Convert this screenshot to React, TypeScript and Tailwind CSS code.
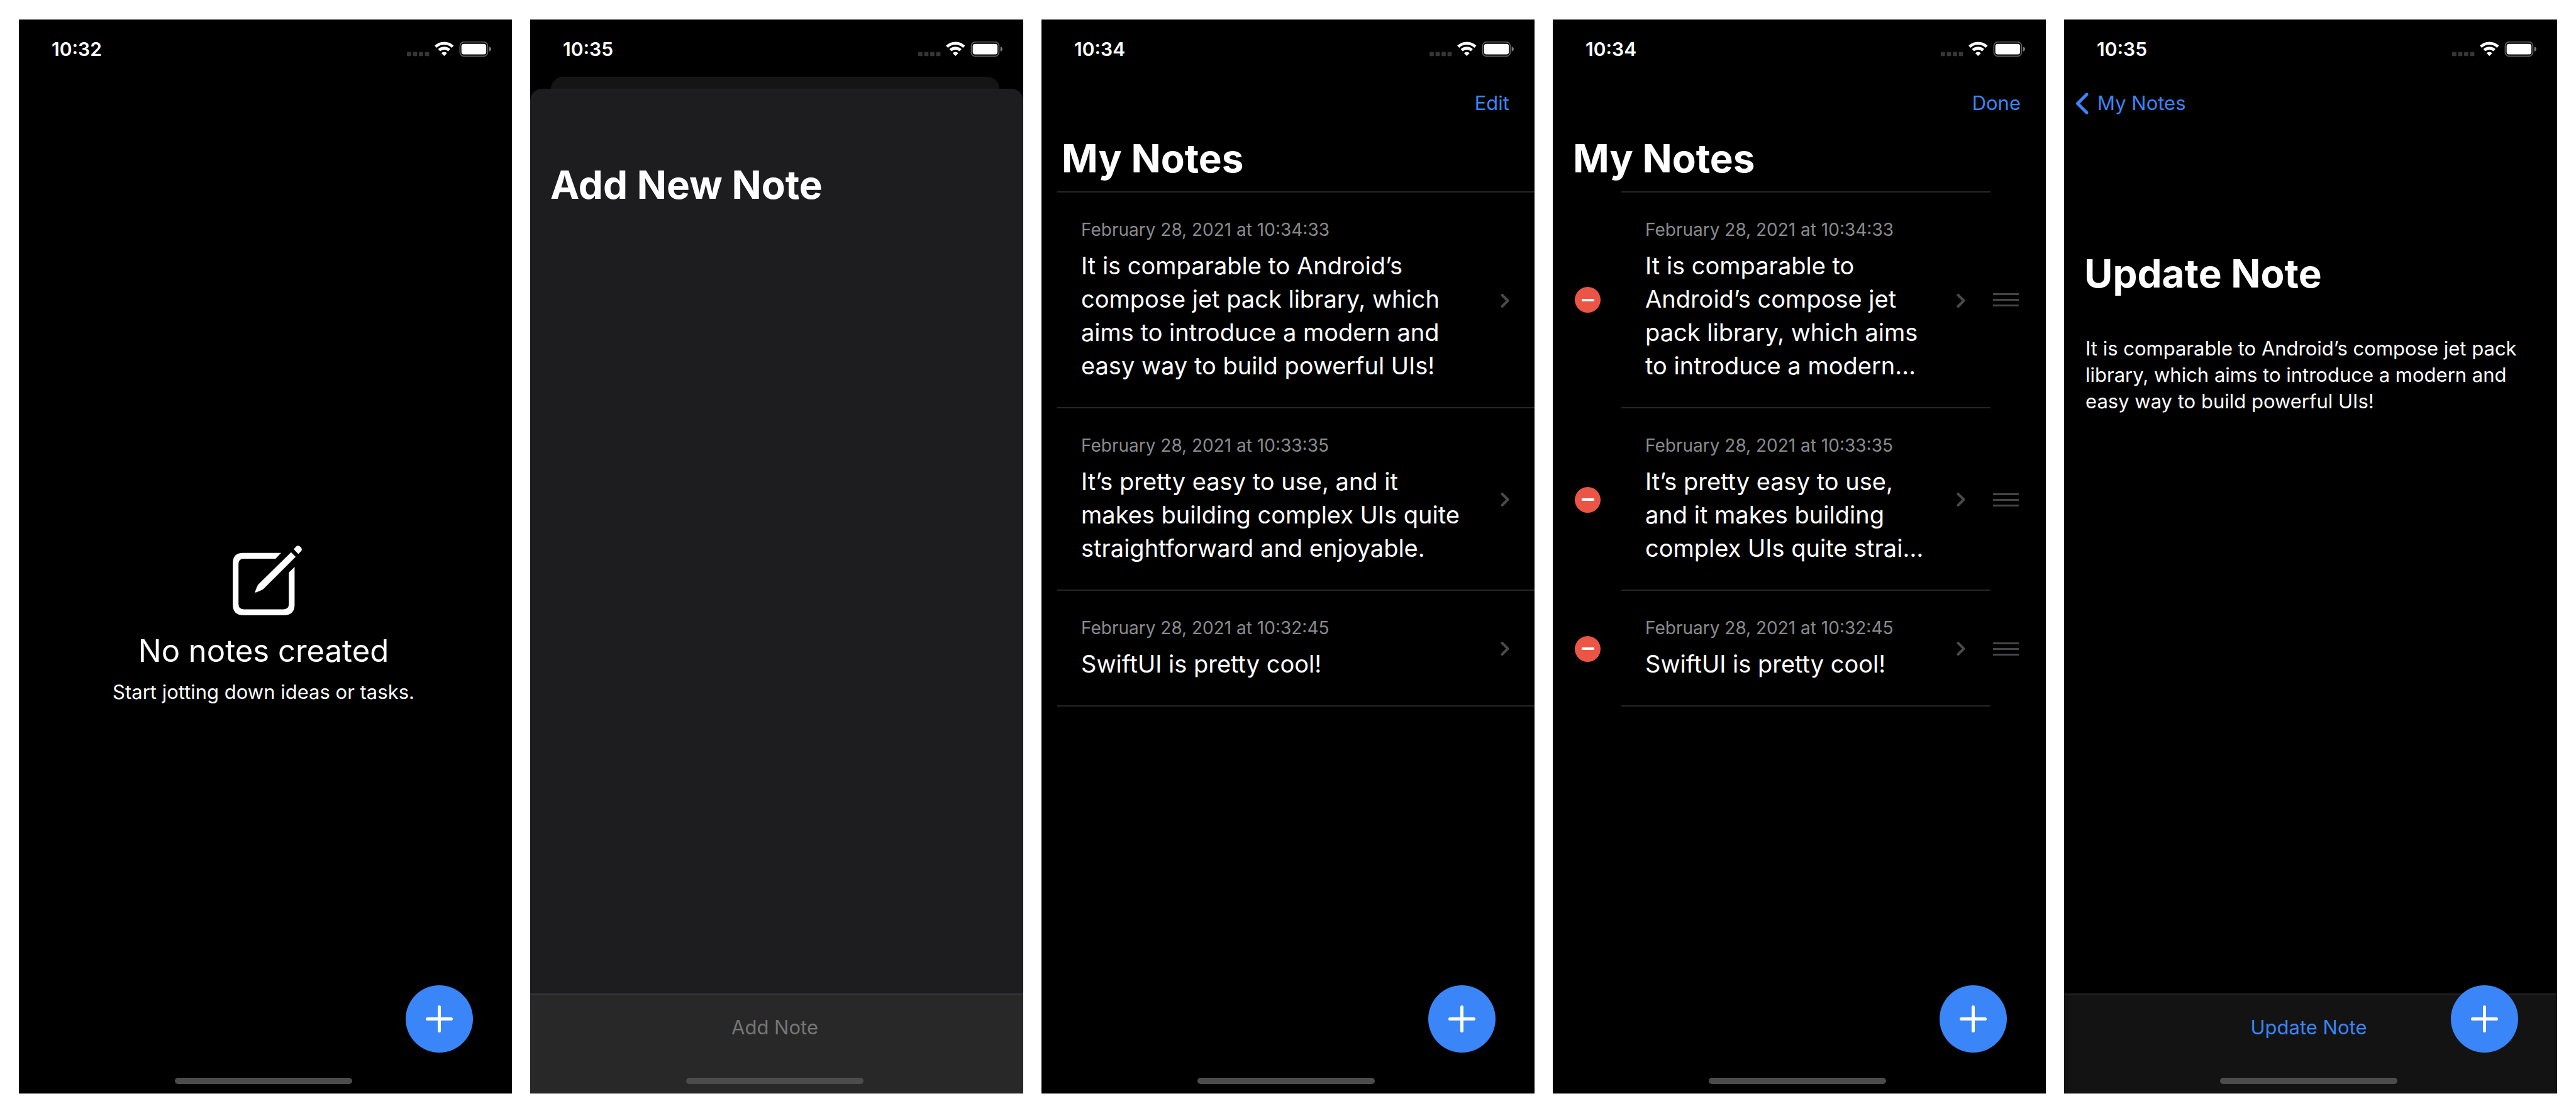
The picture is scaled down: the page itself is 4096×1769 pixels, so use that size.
import type { ReactNode } from 'react';

const notes = [
  {
    date: 'February 28, 2021 at 10:34:33',
    text: 'It is comparable to Android’s compose jet pack library, which aims to introduce a modern and easy way to build powerful UIs!',
    preview: 'It is comparable to Android’s compose jet pack library, which aims to introduce a modern…',
  },
  {
    date: 'February 28, 2021 at 10:33:35',
    text: 'It’s pretty easy to use, and it makes building complex UIs quite straightforward and enjoyable.',
    preview: 'It’s pretty easy to use, and it makes building complex UIs quite strai…',
  },
  {
    date: 'February 28, 2021 at 10:32:45',
    text: 'SwiftUI is pretty cool!',
    preview: 'SwiftUI is pretty cool!',
  },
];

function StatusIcons() {
  return (
    <svg viewBox="45 79 408 73" className="h-6 w-[134px]" aria-hidden="true">
      <g fill="#363636">
        <rect x="45" y="129" width="21" height="21" rx="5" />
        <rect x="74" y="129" width="21" height="21" rx="5" />
        <rect x="103" y="129" width="21" height="21" rx="5" />
        <rect x="132" y="129" width="21" height="21" rx="5" />
      </g>
      <g fill="none" stroke="#fff" strokeWidth="14">
        <path d="M184 104 A60 60 0 0 1 267 104" />
        <path d="M201 121 A36 36 0 0 1 250 121" />
      </g>
      <path d="M212 135 A19 19 0 0 1 239 135 L225.500 149 Z" fill="#fff" />
      <rect x="302" y="81" width="134" height="69" rx="19" fill="none" stroke="#636363" strokeWidth="5" />
      <rect x="309" y="90" width="120" height="51" rx="11" fill="#fff" />
      <path d="M443 104 C450 106 453 110 453 115.500 C453 121 450 125 443 127 Z" fill="#7a7a7a" />
    </svg>
  );
}

function StatusBar({ time }: { time: string }) {
  return (
    <div className="flex h-[93px] shrink-0 items-center justify-between pr-[33px] pl-[52px]">
      <time className="text-[30px] leading-9 font-semibold">{time}</time>
      <StatusIcons />
    </div>
  );
}

function Phone({ label, children }: { label: string; children: ReactNode }) {
  return (
    <section aria-label={label} className="relative flex min-w-0 flex-col overflow-hidden bg-black text-white">
      {children}
    </section>
  );
}

function HomeIndicator() {
  return (
    <div className="mt-auto flex shrink-0 justify-center pr-[6px] pb-[15px]">
      <div className="h-[10px] w-[282px] rounded-full bg-[#4c4c4c]" />
    </div>
  );
}

function Fab() {
  return (
    <button
      type="button"
      aria-label="New note"
      className="absolute right-[62px] bottom-[65px] flex size-[107px] items-center justify-center rounded-full bg-[#3a85f7]"
    >
      <svg viewBox="0 0 43 43" className="size-[43px]" fill="none" stroke="#fff" strokeWidth="5" strokeLinecap="round" aria-hidden="true">
        <path d="M21.500 2.500 V40.500 M2.500 21.500 H40.500" />
      </svg>
    </button>
  );
}

function Chevron() {
  return (
    <svg viewBox="0 0 14 22" className="h-[22px] w-[14px] shrink-0" fill="none" stroke="#4a4a4c" strokeWidth="4" strokeLinecap="round" strokeLinejoin="round" aria-hidden="true">
      <path d="M2.500 2 L11.500 11 L2.500 20" />
    </svg>
  );
}

function NoteBody({ date, text }: { date: string; text: string }) {
  return (
    <div className="min-w-0 flex-1">
      <p className="text-[28px] leading-9 text-[#8a8a8e]">{date}</p>
      <p className="mt-[13px] text-[38px] leading-[53px]">{text}</p>
    </div>
  );
}

function ListHeader({ action }: { action: string }) {
  return (
    <>
      <div className="flex h-[80px] shrink-0 items-center justify-end pr-10">
        <button type="button" className="text-[31px] leading-10 text-[#3a85f7]">
          {action}
        </button>
      </div>
      <h1 className="h-[100px] shrink-0 pt-2 pl-8 text-[62px] leading-[80px] font-bold">My Notes</h1>
    </>
  );
}

function EmptyScreen() {
  return (
    <Phone label="Empty list">
      <StatusBar time="10:32" />
      <div className="flex flex-col items-center pt-[743px] pr-[6px]">
        <svg viewBox="-12 0 125 113" className="h-[111px] w-[123px]" aria-hidden="true">
          <path
            fill="#fff"
            d="M78.500 12 H17 Q0.300 12 0.300 28.700 V96 Q0.300 112.700 17 112.700 H83.600 Q100.300 112.700 100.300 96 V34.700 L91 43.800 V94.500 Q91 103.300 82.500 103.300 H18 Q9.500 103.300 9.500 94.500 V30 Q9.500 21.300 18 21.300 H69.500 Z"
          />
          <path fill="#fff" d="M94.600 11 L102 18.300 L50 70.300 Q47 72.500 37.600 76 Q36 76.300 36.400 74.500 Q39.500 65.500 42 62.500 Z" />
          <path fill="#fff" d="M98.900 6 L102 2.500 Q105.600 -1.500 109.500 2 Q114 6 110.500 9.700 L106.400 13.700 Z" />
        </svg>
        <h1 className="mt-[22px] text-[49px] leading-[70px]">No notes created</h1>
        <p className="mt-[10px] text-[31px] leading-10">Start jotting down ideas or tasks.</p>
      </div>
      <HomeIndicator />
      <Fab />
    </Phone>
  );
}

function AddScreen() {
  return (
    <Phone label="Add note">
      <StatusBar time="10:35" />
      <div className="-mt-[2px] mr-[38px] ml-[33px] h-[19px] shrink-0 rounded-t-[19px] bg-[#151515]" />
      <div className="flex flex-1 flex-col overflow-hidden rounded-t-[19px] bg-[#1d1d1f]">
        <h1 className="pt-[113px] pl-8 text-[62px] leading-[80px] font-bold">Add New Note</h1>
        <div className="mt-auto flex h-[159px] flex-col border-t-2 border-[#363638] bg-[#282828]">
          <button type="button" disabled className="mt-8 pr-[6px] text-[31px] leading-10 text-[#767676]">
            Add Note
          </button>
          <HomeIndicator />
        </div>
      </div>
    </Phone>
  );
}

function ListScreen() {
  return (
    <Phone label="Notes list">
      <StatusBar time="10:34" />
      <ListHeader action="Edit" />
      <ul className="ml-[25px] border-t-2 border-[#262626]">
        {notes.map((note) => (
          <li key={note.date} className="border-b-2 border-[#262626]">
            <a href="#note" className="flex items-center pt-[41px] pr-10 pb-[39px] pl-[38px]">
              <NoteBody date={note.date} text={note.text} />
              <div className="pl-[45px]">
                <Chevron />
              </div>
            </a>
          </li>
        ))}
      </ul>
      <HomeIndicator />
      <Fab />
    </Phone>
  );
}

function EditScreen() {
  return (
    <Phone label="Edit notes list">
      <StatusBar time="10:34" />
      <ListHeader action="Done" />
      <ul>
        {notes.map((note, index) => (
          <li key={note.date} className="flex">
            <div className="flex w-[109px] shrink-0 items-center pl-[35px]">
              <button type="button" aria-label="Delete note" className="flex size-[41px] items-center justify-center rounded-full bg-[#eb5545]">
                <span className="h-1 w-5 bg-white" />
              </button>
            </div>
            <div className={index === 0 ? 'min-w-0 flex-1 border-y-2 border-[#262626]' : 'min-w-0 flex-1 border-b-2 border-[#262626]'}>
              <a href="#note" className="flex items-center pt-[41px] pr-10 pb-[39px] pl-[38px]">
                <NoteBody date={note.date} text={note.preview} />
                <div className="pl-[45px]">
                  <Chevron />
                </div>
              </a>
            </div>
            <div className="flex w-[88px] shrink-0 items-center pl-1">
              <button type="button" aria-label="Reorder note" className="flex w-[41px] flex-col gap-[6px]">
                <span className="h-[3px] bg-[#454547]" />
                <span className="h-[3px] bg-[#454547]" />
                <span className="h-[3px] bg-[#454547]" />
              </button>
            </div>
          </li>
        ))}
      </ul>
      <HomeIndicator />
      <Fab />
    </Phone>
  );
}

function UpdateScreen() {
  return (
    <Phone label="Update note">
      <StatusBar time="10:35" />
      <div className="flex h-[80px] shrink-0 items-center pl-[18px]">
        <a href="#notes" className="flex items-center gap-[14px] text-[31px] leading-10 text-[#3a85f7]">
          <svg viewBox="0 0 21 35" className="h-[35px] w-[21px]" fill="none" stroke="currentColor" strokeWidth="5" strokeLinecap="round" strokeLinejoin="round" aria-hidden="true">
            <path d="M18 3 L3.500 17.500 L18 32" />
          </svg>
          My Notes
        </a>
      </div>
      <h1 className="pt-[191px] pl-8 text-[62px] leading-[80px] font-bold">Update Note</h1>
      <textarea
        aria-label="Note text"
        rows={3}
        className="mt-[58px] resize-none overflow-hidden bg-transparent pr-10 pl-[34px] text-[31px] leading-[42px] outline-none"
        defaultValue="It is comparable to Android’s compose jet pack library, which aims to introduce a modern and easy way to build powerful UIs!"
      />
      <div className="mt-auto flex h-[159px] flex-col border-t-2 border-[#232323] bg-[#131313]">
        <button type="button" className="mt-8 pr-[6px] text-[31px] leading-10 text-[#3a85f7]">
          Update Note
        </button>
        <HomeIndicator />
      </div>
      <Fab />
    </Phone>
  );
}

export default function App() {
  return (
    <main className="grid min-h-screen grid-cols-5 gap-[29px] bg-white px-[30px] py-[31px] font-['Inter',sans-serif]">
      <EmptyScreen />
      <AddScreen />
      <ListScreen />
      <EditScreen />
      <UpdateScreen />
    </main>
  );
}
